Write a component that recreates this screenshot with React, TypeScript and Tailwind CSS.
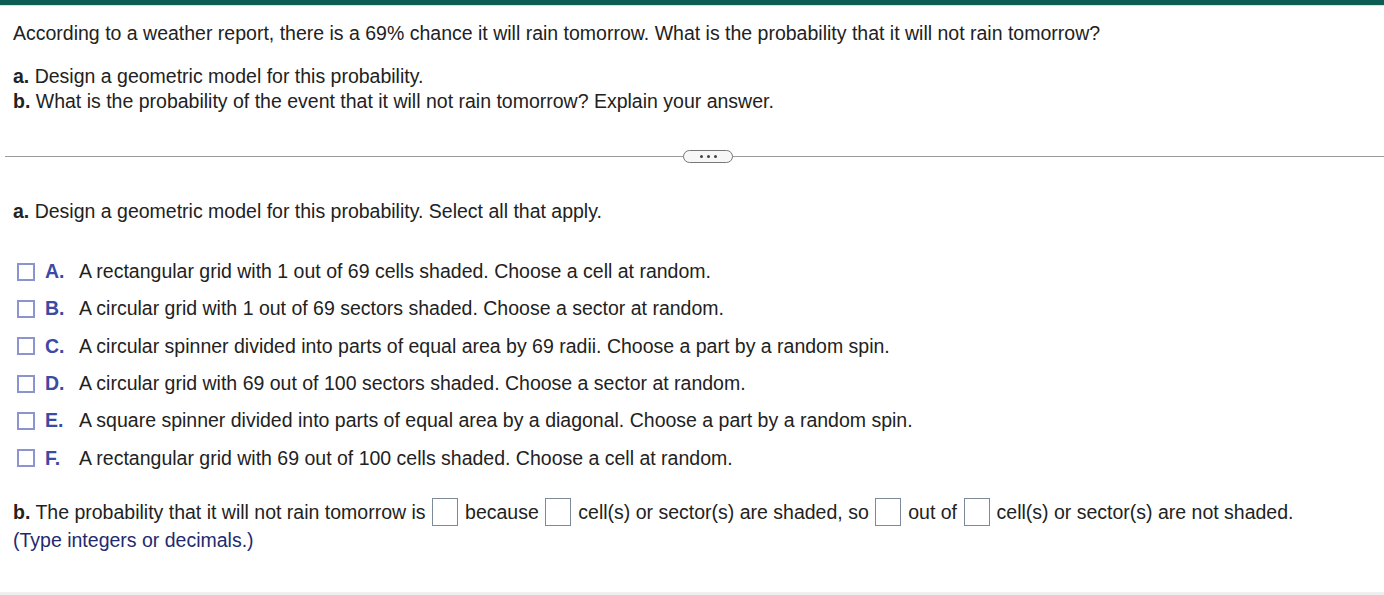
import React from 'react';

const options = [
  { key: 'A', text: 'A rectangular grid with 1 out of 69 cells shaded. Choose a cell at random.' },
  { key: 'B', text: 'A circular grid with 1 out of 69 sectors shaded. Choose a sector at random.' },
  { key: 'C', text: 'A circular spinner divided into parts of equal area by 69 radii. Choose a part by a random spin.' },
  { key: 'D', text: 'A circular grid with 69 out of 100 sectors shaded. Choose a sector at random.' },
  { key: 'E', text: 'A square spinner divided into parts of equal area by a diagonal. Choose a part by a random spin.' },
  { key: 'F', text: 'A rectangular grid with 69 out of 100 cells shaded. Choose a cell at random.' },
];

function Blank() {
  return <span className="ml-[6.5px] mr-[7px] inline-block h-[28px] w-[26px] border border-[#7d8a99] bg-white align-middle" />;
}

export default function App() {
  return (
    <div className="flex h-[595px] w-[1384px] flex-col bg-white text-[19.5px] text-[#222] font-['Liberation_Sans',Arial,sans-serif]">
      <div className="h-[5px] bg-[#0c5e55]" />
      <div className="h-px bg-[#cfe7e3]" />

      <div className="px-[13px] pt-[16px]">
        <p className="leading-[22px]">
          According to a weather report, there is a 69% chance it will rain tomorrow. What is the probability that it will not rain tomorrow?
        </p>
        <div className="mt-[20px] leading-[25px]">
          <p><span className="font-bold">a.</span> Design a geometric model for this probability.</p>
          <p><span className="font-bold">b.</span> What is the probability of the event that it will not rain tomorrow? Explain your answer.</p>
        </div>
      </div>

      <div className="relative mt-[42px] ml-[5px] flex items-center">
        <div className="h-px flex-1 bg-[#9a9a9a]" />
        <div className="absolute left-[678px] top-[-6px] flex h-[13px] w-[50px] items-center justify-center gap-[4px] rounded-full border border-[#777] bg-[#f7f7f7]">
          <span className="h-[3px] w-[3px] rounded-full bg-[#444]" />
          <span className="h-[3px] w-[3px] rounded-full bg-[#444]" />
          <span className="h-[3px] w-[3px] rounded-full bg-[#444]" />
        </div>
      </div>

      <div className="px-[13px] pt-[43px]">
        <p className="leading-[22px]">
          <span className="font-bold">a.</span> Design a geometric model for this probability. Select all that apply.
        </p>

        <div className="mt-[31px] flex flex-col">
          {options.map((o) => (
            <label key={o.key} className="flex h-[37.3px] items-center">
              <span className="ml-[4px] h-[18px] w-[18px] border-2 border-[#8a94d0] bg-white" />
              <span className="ml-[10px] w-[34px] font-bold text-[#3c4aa3]">{o.key}.</span>
              <span>{o.text}</span>
            </label>
          ))}
        </div>

        <div className="mt-[21px]">
          <p className="flex items-center leading-[28px]">
            <span><span className="font-bold">b.</span> The probability that it will not rain tomorrow is</span>
            <Blank />
            <span>because</span>
            <Blank />
            <span>cell(s) or sector(s) are shaded, so</span>
            <Blank />
            <span>out of</span>
            <Blank />
            <span>cell(s) or sector(s) are not shaded.</span>
          </p>
          <p className="leading-[28px] text-[#1f2a6e]">(Type integers or decimals.)</p>
        </div>
      </div>

      <div className="mt-auto h-[3px] bg-[#efefef]" />
    </div>
  );
}
